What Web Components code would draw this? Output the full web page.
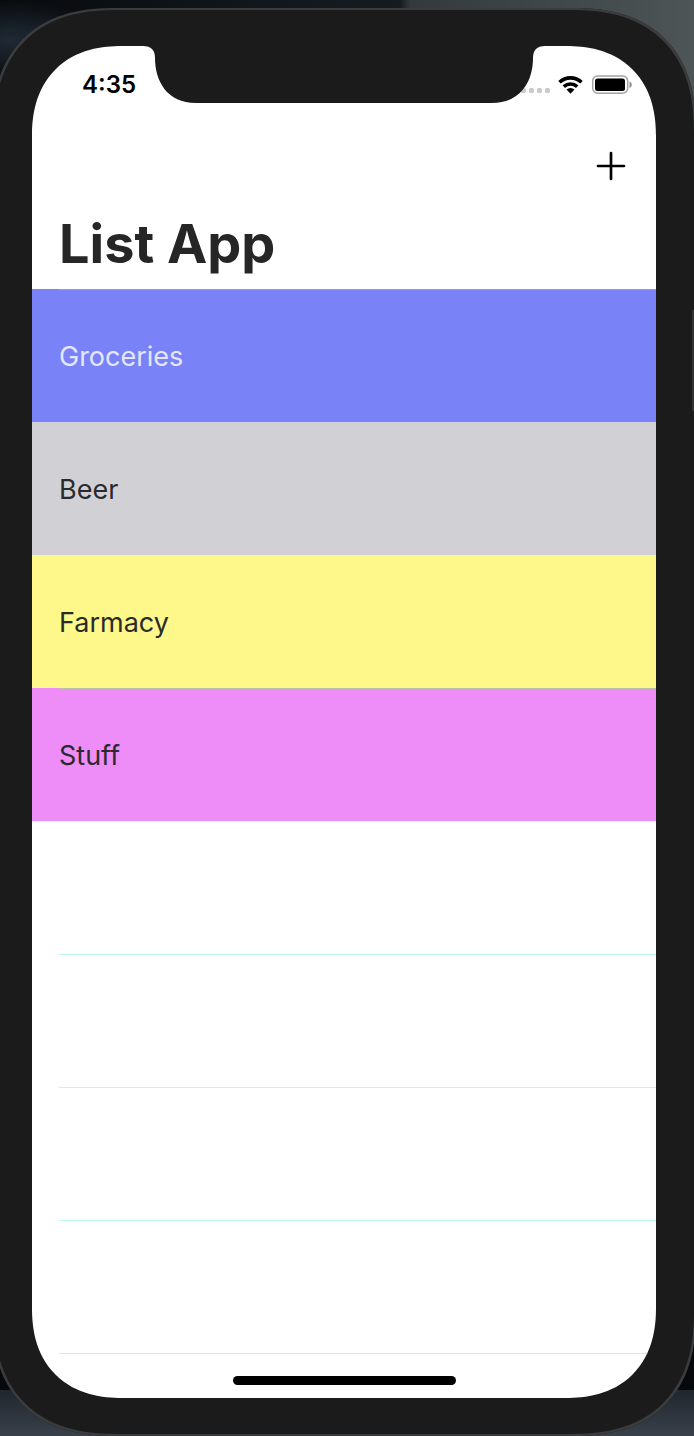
<!DOCTYPE html>
<html lang="en">
<head>
<meta charset="utf-8">
<meta name="viewport" content="width=device-width, initial-scale=1">
<title>List App</title>
<style>
html, body { margin: 0; min-height: 100%; }
body {
  overflow-x: hidden;
  font-family: Inter, "Liberation Sans", sans-serif;
  background:
    radial-gradient(ellipse 90px 40px at 10px 40px, #202a35, transparent) no-repeat,
    linear-gradient(90deg, #080b0e 0, #11171c 270px, #161b20 400px, #343a3b 410px, #3d4446 75%, #4e5557) 0 0 / 100% 140px no-repeat,
    linear-gradient(180deg, #20262d, #39414b) 0 100% / 100% 46px no-repeat,
    #08090c;
}
</style>
</head>
<body>
<phone-frame>
  <status-bar time="4:35"></status-bar>
  <nav-header heading="List App"></nav-header>
  <color-list>
    <list-row lined style="--fill:#7983f7;--ink:#e4e7fa;--line:#73b0d8">Groceries</list-row>
    <list-row style="--fill:#d1d0d5">Beer</list-row>
    <list-row style="--fill:#fef88b">Farmacy</list-row>
    <list-row lined style="--fill:#ee8cf8;--line:#b8c0a8">Stuff</list-row>
    <list-row></list-row>
    <list-row lined></list-row>
    <list-row lined></list-row>
    <list-row lined></list-row>
    <list-row lined short></list-row>
  </color-list>
</phone-frame>

<script>
const define = (name, markup, setup) => customElements.define(name, class extends HTMLElement {
  constructor() {
    super();
    this.attachShadow({ mode: "open" }).innerHTML = markup;
  }
  connectedCallback() { if (setup) setup(this, this.shadowRoot); }
});

define("phone-frame", `
<style>
  :host { display: block; padding-top: 8px; overflow: hidden; }
  .case {
    position: relative; box-sizing: border-box; margin: 0 -2px 0 -8px; padding: 38px 40px;
    min-height: calc(100vh - 8px); display: flex; background: #1b1b1b;
    border-radius: 110px; box-shadow: inset 0 0 0 2px #3b3c3d;
  }
  .screen {
    position: relative; flex: 1; min-width: 0; display: flex; flex-direction: column;
    background: #fff; border-radius: 80px; overflow: hidden;
  }
  @supports (corner-shape: superellipse(1.27)) {
    .case { border-radius: 124px; corner-shape: superellipse(1.27); }
    .screen { border-radius: 90px; corner-shape: superellipse(1.2); }
  }
  .notch { position: absolute; top: 0; left: 50%; margin-left: -201px; display: block; }
  .home {
    position: absolute; bottom: 13px; left: 50%; margin-left: -111px;
    width: 223px; height: 9px; border-radius: 5px; background: #000;
  }
  .side { position: absolute; right: 2px; top: 302px; width: 2px; height: 101px; background: #333; }
</style>
<div class="case">
  <main class="screen">
    <slot></slot>
    <svg class="notch" width="402" height="58" viewBox="0 0 402 58" aria-hidden="true">
      <path fill="#1b1b1b" d="M0 0C8 0 12 4 12 12C12 35 24 57 53 57H349C378 57 390 35 390 12C390 4 394 0 402 0Z"/>
    </svg>
    <div class="home"></div>
  </main>
  <div class="side"></div>
</div>`);

define("status-bar", `
<style>
  :host { display: flex; align-items: center; justify-content: space-between; height: 78px; padding: 0 24px 0 50px; color: #000; }
  time { font-size: 24px; line-height: 28px; font-weight: 600; }
  svg { display: block; }
</style>
<time></time>
<svg width="112" height="20" viewBox="0 0 112 20" role="img" aria-label="No signal, Wi-Fi on, battery full">
  <g fill="#cbcbcb">
    <rect x="1" y="13" width="5" height="5" rx="1.5"/><rect x="9" y="13" width="5" height="5" rx="1.5"/>
    <rect x="17" y="13" width="5" height="5" rx="1.5"/><rect x="25" y="13" width="5" height="5" rx="1.5"/>
  </g>
  <g fill="none" stroke="#000" stroke-width="3.6">
    <path d="M39.500 7.200A16.200 16.200 0 0 1 61.500 7.200"/>
    <path d="M43.800 11.600A10 10 0 0 1 57.200 11.600"/>
  </g>
  <path d="M46.500 14.600A6 6 0 0 1 54.500 14.600L50.500 18.700Z"/>
  <rect x="72.700" y="1" width="35" height="17.300" rx="5" fill="none" stroke="#a2a2a2" stroke-width="1.500"/>
  <rect x="75" y="3.500" width="30" height="12.500" rx="2.500"/>
  <path fill="#8e8e8e" d="M109.500 6.500C112.500 7.500 112.500 12 109.500 13Z"/>
</svg>`, (el, root) => { root.querySelector("time").textContent = el.getAttribute("time"); });

define("nav-header", `
<style>
  :host { display: flex; flex-direction: column; padding: 18px 26px 12px 27px; }
  button { align-self: flex-end; width: 38px; height: 48px; padding: 0; border: 0; background: none; color: #000; display: grid; place-items: center; }
  svg { display: block; }
  h1 { margin: 20px 0 0; font-size: 54px; line-height: 67px; font-weight: 700; color: #262626; }
</style>
<button type="button" aria-label="Add list">
  <svg width="30" height="30" viewBox="0 0 30 30" fill="none" stroke="currentColor" stroke-width="2.700" stroke-linecap="round"><path d="M15 2V28M2 15H28"/></svg>
</button>
<h1></h1>`, (el, root) => { root.querySelector("h1").textContent = el.getAttribute("heading"); });

define("color-list", `
<style>
  :host { display: block; }
  div { display: flex; flex-direction: column; }
</style>
<div role="list"><slot></slot></div>`);

define("list-row", `
<style>
  :host {
    position: relative; display: flex; align-items: center; box-sizing: border-box; height: 133px; padding: 2px 27px 0;
    font-size: 27px; line-height: 34px; color: var(--ink, #2a2a2c); background: var(--fill, transparent);
  }
  :host([short]) { height: 45px; }
  :host([lined])::before {
    content: ""; position: absolute; top: 0; left: 27px; right: 0; height: 1px; background: var(--line, #bdf8e2);
  }
</style>
<slot></slot>`, el => { el.setAttribute("role", "listitem"); });
</script>
</body>
</html>
